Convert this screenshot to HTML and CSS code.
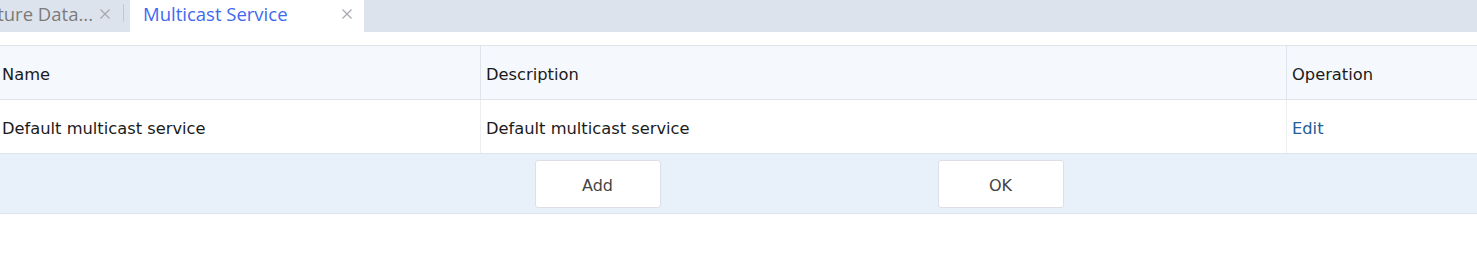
FILE: index.html
```html
<!DOCTYPE html>
<html>
<head>
<meta charset="utf-8">
<link rel="stylesheet" href="styles.css">
</head>
<body>
<div class="tabbar">
  <div class="tab inactive">
    <span class="tab-label">Feature Data...</span>
    <svg class="tab-close" width="10" height="10" viewBox="0 0 10 10"><path d="M0.5 0.5L9.5 9.5M9.5 0.5L0.5 9.5" stroke="#a3a7ad" stroke-width="1.1" fill="none"/></svg>
  </div>
  <div class="tab-sep"></div>
  <div class="tab active">
    <span class="tab-label">Multicast Service</span>
    <svg class="tab-close" width="10" height="10" viewBox="0 0 10 10"><path d="M0.5 0.5L9.5 9.5M9.5 0.5L0.5 9.5" stroke="#a3a7ad" stroke-width="1.1" fill="none"/></svg>
  </div>
</div>
<div class="content">
  <div class="panel">
    <div class="row head">
      <div class="cell c-name">Name</div>
      <div class="cell c-desc">Description</div>
      <div class="cell c-op">Operation</div>
    </div>
    <div class="row body">
      <div class="cell c-name">Default multicast service</div>
      <div class="cell c-desc">Default multicast service</div>
      <div class="cell c-op"><a class="link">Edit</a></div>
    </div>
    <div class="footer">
      <button class="btn">Add</button>
      <button class="btn">OK</button>
    </div>
  </div>
</div>
</body>
</html>
```
FILE: styles.css
```css
html, body {
  margin: 0;
  padding: 0;
  background: #fff;
  overflow: hidden;
  font-family: "DejaVu Sans", Verdana, sans-serif;
}
.tabbar {
  display: flex;
  height: 32px;
  background: #dde3ed;
  overflow: hidden;
}
.tab {
  display: flex;
  align-items: center;
  box-sizing: border-box;
  height: 32px;
  padding-bottom: 5px;
  font-family: "Open Sans", "Noto Sans", sans-serif;
  font-size: 18.5px;
  white-space: nowrap;
  flex: none;
}
.tab.inactive {
  width: 123px;
  overflow: hidden;
  justify-content: flex-end;
  padding-right: 13px;
  color: #7b7b7b;
  gap: 7px;
}
.tab-close {
  flex: none;
}
.tab-sep {
  width: 1px;
  height: 18px;
  margin-top: 4px;
  background: #c3c9d3;
  flex: none;
}
.tab.active {
  margin-left: 6px;
  background: #fff;
  color: #4169f0;
  width: 234px;
  padding-left: 13px;
  padding-right: 12px;
  justify-content: space-between;
}
.content {
  padding-top: 13px;
  overflow: hidden;
}
.panel {
  width: 1606px;
  margin-left: -4px;
  border-top: 1px solid #dfe3ea;
}
.row {
  display: flex;
  height: 53px;
  border-bottom: 1px solid #dfe3ea;
  font-size: 16.3px;
  color: #1b1b1b;
}
.row.head {
  background: #f5f8fc;
}
.cell {
  display: flex;
  align-items: center;
  box-sizing: border-box;
  padding-left: 6px;
  padding-top: 4px;
}
.c-name { width: 484px; }
.c-desc { width: 806px; border-left: 1px solid #dfe3ea; padding-left: 5px; }
.c-op { flex: 1; border-left: 1px solid #dfe3ea; padding-left: 5px; }
.row.body .c-desc, .row.body .c-op { border-left-color: #eceef2; }
.link {
  color: #245e98;
}
.footer {
  height: 59px;
  background: #e8f0fa;
  border-bottom: 1px solid #dfe3ea;
  display: flex;
  justify-content: center;
  align-items: center;
  gap: 277px;
}
.btn {
  width: 126px;
  height: 48px;
  margin-top: 1px;
  background: #fff;
  border: 1px solid #dcdfe6;
  border-radius: 3px;
  font-family: "DejaVu Sans", sans-serif;
  font-size: 16px;
  color: #444;
  padding: 3px 0 0 0;
}
```
